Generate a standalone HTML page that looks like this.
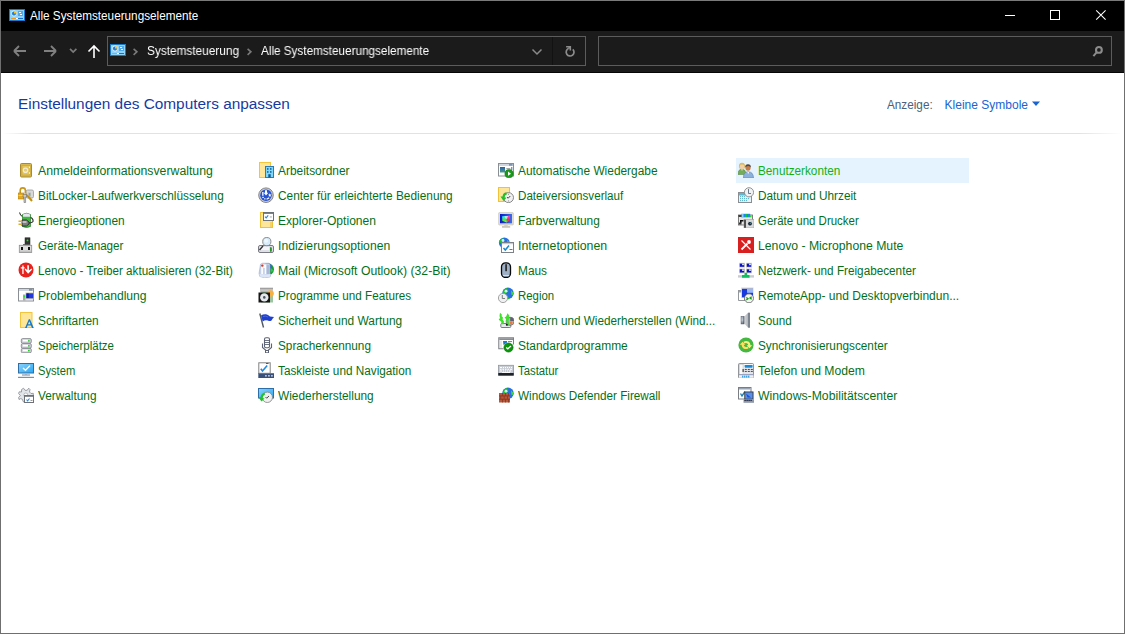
<!DOCTYPE html><html><head><meta charset="utf-8"><style>
*{margin:0;padding:0;box-sizing:border-box}
html,body{width:1125px;height:634px;overflow:hidden;background:#fff}
body{position:relative;font-family:"Liberation Sans",sans-serif;}
.a{position:absolute}
#title{left:0;top:0;width:1125px;height:31px;background:#000;border-top:1px solid #7a7a7a}
#tb{left:0;top:31px;width:1125px;height:42px;background:#1b1b1b;border-bottom:1px solid #060606}
#lb{left:0;top:0;width:1px;height:634px;background:#6f6f6f}
#rb{left:1124px;top:0;width:1px;height:634px;background:#6f6f6f}
#bb{left:0;top:633px;width:1125px;height:1px;background:#6f6f6f}
.t{font-size:12px;white-space:nowrap;line-height:14px}
.it{position:absolute;width:233px;height:25px}
.it.h{background:#e5f3ff}
.it svg{position:absolute;left:2px;top:4px;width:16px;height:16px}
.it span{position:absolute;left:22px;top:1px;transform-origin:0 0;line-height:25px;font-size:12px;color:#05701a;white-space:nowrap}
.it.h span{color:#12b012}
</style></head><body>
<div class="a" id="title"></div>
<div class="a" id="tb"></div>
<svg class="a" style="left:9px;top:9px" width="16" height="12" viewBox="0 0 16 12"><rect x="0.5" y="0.5" width="15" height="11" fill="#8fd3fb" stroke="#1a78c8"/>
<rect x="9" y="2" width="5" height="5" fill="#4fa8e8"/>
<rect x="10" y="3" width="2" height="1" fill="#fff"/><rect x="12" y="3" width="1" height="1" fill="#f08a10"/>
<rect x="11" y="5" width="2" height="1" fill="#fff"/>
<circle cx="5" cy="4.5" r="2.6" fill="#2280d8" stroke="#fff" stroke-width="0.8"/>
<path d="M5 4.5V1.9A2.6 2.6 0 0 1 7.6 4.5Z" fill="#ffc010"/>
<rect x="2" y="9" width="5" height="1" fill="#f09a18"/><rect x="7" y="9" width="2" height="1" fill="#fff"/><rect x="9" y="9" width="5" height="1" fill="#1a6fd0"/></svg>
<div class="a t" style="left:30px;top:9px;color:#fff;transform:scaleX(0.978);transform-origin:0 0">Alle Systemsteuerungselemente</div>
<svg class="a" style="left:1000px;top:5px" width="20" height="20"><rect x="5" y="10" width="10" height="1" fill="#fff"/></svg>
<svg class="a" style="left:1045px;top:5px" width="20" height="20"><rect x="5.5" y="5.5" width="9" height="9" fill="none" stroke="#fff" stroke-width="1"/></svg>
<svg class="a" style="left:1090px;top:5px" width="20" height="20"><path d="M6.2 5.3L15.6 14.7M15.6 5.3L6.2 14.7" stroke="#fff" stroke-width="1.05"/></svg>
<svg class="a" style="left:10px;top:41px" width="20" height="20"><path d="M4 10H16M4 10L9 5M4 10L9 15" stroke="#808080" stroke-width="1.8" fill="none"/></svg>
<svg class="a" style="left:40px;top:41px" width="20" height="20"><path d="M16 10H4M16 10L11 5M16 10L11 15" stroke="#808080" stroke-width="1.8" fill="none"/></svg>
<svg class="a" style="left:66px;top:41px" width="14" height="20"><path d="M4 7.8L7.2 11L10.4 7.8" stroke="#7a7a7a" stroke-width="1.7" fill="none"/></svg>
<svg class="a" style="left:84px;top:41px" width="20" height="20"><path d="M10 17V5M4.5 10.5L10 5L15.5 10.5" stroke="#fff" stroke-width="1.6" fill="none"/></svg>
<div class="a" style="left:107px;top:36px;width:479px;height:30px;border:1px solid #5c5c5c;"></div>
<div class="a" style="left:552px;top:37px;width:1px;height:28px;background:#121212"></div>
<svg class="a" style="left:110px;top:44px" width="16" height="12" viewBox="0 0 16 12"><rect x="0.5" y="0.5" width="15" height="11" fill="#8fd3fb" stroke="#1a78c8"/>
<rect x="9" y="2" width="5" height="5" fill="#4fa8e8"/>
<rect x="10" y="3" width="2" height="1" fill="#fff"/><rect x="12" y="3" width="1" height="1" fill="#f08a10"/>
<rect x="11" y="5" width="2" height="1" fill="#fff"/>
<circle cx="5" cy="4.5" r="2.6" fill="#2280d8" stroke="#fff" stroke-width="0.8"/>
<path d="M5 4.5V1.9A2.6 2.6 0 0 1 7.6 4.5Z" fill="#ffc010"/>
<rect x="2" y="9" width="5" height="1" fill="#f09a18"/><rect x="7" y="9" width="2" height="1" fill="#fff"/><rect x="9" y="9" width="5" height="1" fill="#1a6fd0"/></svg>
<svg class="a" style="left:130px;top:46px" width="10" height="12"><path d="M3.6 2.8L6.9 5.8L3.6 8.8" stroke="#7a7a7a" stroke-width="1.6" fill="none"/></svg>
<div class="a t" style="left:147px;top:44px;color:#fff;transform:scaleX(0.986);transform-origin:0 0;will-change:transform">Systemsteuerung</div>
<svg class="a" style="left:244px;top:46px" width="10" height="12"><path d="M3.6 2.8L6.9 5.8L3.6 8.8" stroke="#7a7a7a" stroke-width="1.6" fill="none"/></svg>
<div class="a t" style="left:261px;top:44px;color:#fff;transform:scaleX(0.977);transform-origin:0 0;will-change:transform">Alle Systemsteuerungselemente</div>
<svg class="a" style="left:530px;top:45px" width="14" height="14"><path d="M2.5 4.5L7 9L11.5 4.5" stroke="#8a8a8a" stroke-width="1.5" fill="none"/></svg>
<svg class="a" style="left:562px;top:44px" width="16" height="16"><path d="M10.8 5.3A3.9 3.9 0 1 1 6.4 4.6" stroke="#8c8c8c" stroke-width="1.7" fill="none"/><path d="M4.1 2.7H8.3V6.6" stroke="#8c8c8c" stroke-width="1.6" fill="none"/><path d="M6.3 4.6L8.2 2.8" stroke="#8c8c8c" stroke-width="1.6"/></svg>
<div class="a" style="left:598px;top:36px;width:514px;height:30px;border:1px solid #5c5c5c;"></div>
<svg class="a" style="left:1089px;top:44px" width="16" height="16"><circle cx="9.9" cy="5.9" r="2.9" stroke="#8c8c8c" stroke-width="2.1" fill="none"/><path d="M7.8 8.2L4.4 12.1" stroke="#8c8c8c" stroke-width="2"/></svg>
<div class="a" style="left:18px;top:95px;font-size:15.5px;line-height:18px;color:#163aa2;white-space:nowrap;transform:scaleX(0.992);transform-origin:0 0">Einstellungen des Computers anpassen</div>
<div class="a t" style="left:887px;top:98px;color:#4c607a;transform:scaleX(0.978);transform-origin:0 0;">Anzeige:</div>
<div class="a t" style="left:944.6px;top:98px;color:#1a64d2;">Kleine Symbole</div>
<svg class="a" style="left:1030px;top:100px" width="12" height="8"><path d="M2 1.5H10L6 6Z" fill="#1a64d2"/></svg>
<div class="a" style="left:2px;top:133px;width:1121px;height:1px;background:linear-gradient(90deg,rgba(214,228,245,0) 0%,#d6e4f5 2.5%,#d6e4f5 96%,rgba(214,228,245,0) 100%)"></div>
<div class="it" style="left:16px;top:158px"><svg viewBox="0 0 16 16"><rect x="2.5" y="1.5" width="11" height="13.5" rx="1" fill="#d8b74c" stroke="#a98a32"/>
<rect x="4" y="3.5" width="8" height="9.5" fill="#e4c55c" stroke="#c7a43e" stroke-width="0.6"/>
<circle cx="7.5" cy="8.2" r="2.1" fill="none" stroke="#f2ecd6" stroke-width="1.4"/>
<rect x="7" y="7.7" width="1.2" height="1.2" fill="#d0d0d0"/>
<rect x="11" y="4.5" width="1" height="1.6" fill="#f6f2e2"/><rect x="11" y="10.2" width="1" height="1.6" fill="#f6f2e2"/></svg><span style="transform:scaleX(1.0241)">Anmeldeinformationsverwaltung</span></div>
<div class="it" style="left:16px;top:183px"><svg viewBox="0 0 16 16"><rect x="8" y="3" width="7.5" height="8" rx="1.5" fill="#d8d8d8" stroke="#9a9a9a" stroke-width="0.8"/>
<rect x="10" y="5.5" width="3" height="4" fill="#bcbcbc"/><rect x="11.2" y="6" width="0.9" height="2.5" fill="#2ed82e"/>
<path d="M2.2 6.5V3.5A2.6 2.6 0 0 1 7.4 3.5V6.5" fill="none" stroke="#c9961a" stroke-width="1.6"/>
<rect x="0" y="6" width="6" height="6" fill="#e4aa1e" stroke="#b07d10" stroke-width="0.6"/>
<rect x="0.5" y="8" width="5" height="1" fill="#f8d050"/>
<path d="M8 7L14 14" stroke="#c0900e" stroke-width="2"/><path d="M8.5 6.5L10.5 8.5" stroke="#f0c030" stroke-width="1"/>
<path d="M5 7.5H8.5V10H7.6V15.5H6V10H5Z" fill="#c8c8c8" stroke="#707070" stroke-width="0.6"/></svg><span style="transform:scaleX(0.9840)">BitLocker-Laufwerkverschlüsselung</span></div>
<div class="it" style="left:16px;top:208px"><svg viewBox="0 0 16 16"><path d="M1.5 0.5Q2 3 4.5 4.5" fill="none" stroke="#303030" stroke-width="1.1"/>
<path d="M4.5 2.5Q8.5 0 12.5 2.5V14.5Q8.5 16.5 4.5 14.5Z" fill="#3cba3c" stroke="#2a7a2a" stroke-width="0.7"/>
<path d="M5 2.6Q8.5 0.5 12 2.6V4.8H5Z" fill="#e8e4f4"/>
<path d="M12.5 5.5Q15.5 6.5 15 9.5Q14 11 10 11" fill="none" stroke="#303030" stroke-width="1.1"/>
<path d="M4 8H8.5L11 10V12L8.5 14H4Z" fill="#808080" stroke="#202020" stroke-width="0.8"/>
<rect x="4.5" y="9" width="4" height="2" fill="#c0c0c0"/>
<rect x="0.5" y="8.5" width="3.5" height="1.5" fill="#e0b020"/><rect x="0.5" y="11.5" width="3.5" height="1.5" fill="#e0b020"/></svg><span style="transform:scaleX(0.9920)">Energieoptionen</span></div>
<div class="it" style="left:16px;top:233px"><svg viewBox="0 0 16 16"><rect x="7" y="0.8" width="5" height="7" fill="#353535" stroke="#222" stroke-width="0.5"/>
<circle cx="9.5" cy="3.4" r="0.9" fill="#30e030"/>
<rect x="5" y="7.2" width="7" height="1" fill="#555"/>
<rect x="1.3" y="8.3" width="12.4" height="7.2" fill="#dedede" stroke="#8c8c8c" stroke-width="0.8"/>
<rect x="2" y="13.5" width="11" height="1.5" fill="#c4c4c4"/>
<rect x="3" y="10" width="2" height="3" fill="#111"/><rect x="10" y="10" width="2" height="3" fill="#111"/></svg><span style="transform:scaleX(0.9705)">Geräte-Manager</span></div>
<div class="it" style="left:16px;top:258px"><svg viewBox="0 0 16 16"><circle cx="8" cy="7.9" r="7.5" fill="#e8221c"/>
<path d="M2.8 5.2H4.3V3.6H5.6V5.2H6.6V6.4H5.6V12H4.3V6.4H2.8Z" fill="#fff"/>
<path d="M9.3 3.2H10.9V8.6L13.4 6.4L14.2 7.6L10.1 11.7L6.6 7.6L7.6 6.5L9.3 8.2Z" fill="#fff"/></svg><span style="transform:scaleX(0.9711)">Lenovo - Treiber aktualisieren (32-Bit)</span></div>
<div class="it" style="left:16px;top:283px"><svg viewBox="0 0 16 16"><rect x="0.5" y="1.5" width="15" height="12.5" fill="#fff" stroke="#8a8f96"/>
<rect x="1" y="2" width="14" height="2" fill="#cfd6e0"/><rect x="11" y="2.2" width="3.5" height="1.4" fill="#6b84a8"/>
<rect x="7.5" y="5.5" width="8" height="7" fill="#c8c8b0"/>
<rect x="8.3" y="6.3" width="7" height="5" fill="#2238d8"/><rect x="8.5" y="6.5" width="2.2" height="4.5" fill="#0818a0"/>
<rect x="5" y="7.5" width="2.5" height="6" fill="#a8a8a8"/><circle cx="6.2" cy="9.5" r="0.9" fill="#30e030"/></svg><span style="transform:scaleX(1.0112)">Problembehandlung</span></div>
<div class="it" style="left:16px;top:308px"><svg viewBox="0 0 16 16"><rect x="2.5" y="0.5" width="11.5" height="15" fill="#fde69a" stroke="#f2c53c"/>
<path d="M7 16L10.8 7.2H12L15.8 16H14L13 13.6H9.6L8.7 16Z M10 12.3H12.5L11.3 9.2Z" fill="#1278d0"/></svg><span style="transform:scaleX(0.9869)">Schriftarten</span></div>
<div class="it" style="left:16px;top:333px"><svg viewBox="0 0 16 16"><g id="dr"><rect x="3.3" y="1.6" width="10" height="4.6" rx="1.3" fill="#d4d4dc" stroke="#7c7c88" stroke-width="0.8"/><rect x="5" y="2.8" width="5" height="1.6" fill="#fff"/><rect x="10" y="3.2" width="1.6" height="1.3" fill="#22d022"/></g>
<rect x="3.3" y="6.6" width="10" height="4.6" rx="1.3" fill="#d4d4dc" stroke="#7c7c88" stroke-width="0.8"/><rect x="5" y="7.8" width="5" height="1.6" fill="#fff"/><rect x="10" y="8.2" width="1.6" height="1.3" fill="#22d022"/>
<rect x="3.3" y="11.4" width="10" height="4.4" rx="1.3" fill="#d4d4dc" stroke="#7c7c88" stroke-width="0.8"/><rect x="5" y="12.6" width="5" height="1.6" fill="#fff"/><rect x="10" y="13" width="1.6" height="1.3" fill="#22d022"/></svg><span style="transform:scaleX(0.9570)">Speicherplätze</span></div>
<div class="it" style="left:16px;top:358px"><svg viewBox="0 0 16 16"><defs><linearGradient id="sysg" x1="0" y1="0" x2="1" y2="1"><stop offset="0" stop-color="#8ad4fb"/><stop offset="1" stop-color="#2aa6f2"/></linearGradient></defs>
<rect x="0.5" y="1.5" width="15" height="9.5" fill="url(#sysg)" stroke="#2f6ea6"/>
<path d="M5 6L7.5 8.3L12 3.6" fill="none" stroke="#fff" stroke-width="1.3"/>
<rect x="7" y="11.5" width="2" height="1" fill="#a8b8c8"/><rect x="4" y="12.5" width="8" height="1" fill="#6c84a0"/>
<rect x="0" y="14.8" width="16" height="1.2" fill="#7a90a8"/></svg><span style="transform:scaleX(0.9300)">System</span></div>
<div class="it" style="left:16px;top:383px"><svg viewBox="0 0 16 16"><path d="M5.5 1.2L7 3.3L9.2 3.3L10.7 1.2L12 2.5L11.5 5L13 6.5L15.3 6.3V8.5L13 8.8L12.2 10.5L6 15L5 14.5L4.6 12.5L2.8 11.6L1 12.5L0.6 10.5L2.3 8.5L0.6 6.5L1.2 4.8L3.5 5L3.6 2.5Z" fill="#e2e6ea" stroke="#85898e" stroke-width="0.8"/>
<circle cx="7.8" cy="8" r="2" fill="#fff" stroke="#85898e" stroke-width="0.5"/>
<rect x="6.5" y="8.5" width="9" height="7" fill="#fff" stroke="#6e7278"/>
<rect x="7" y="9" width="8" height="1" fill="#8a8e94"/>
<path d="M8.5 12.5L9.6 13.8L11.5 11.5" fill="none" stroke="#2a8ae6" stroke-width="1.1"/>
<rect x="12.5" y="13" width="2" height="1" fill="#999"/></svg><span style="transform:scaleX(0.9847)">Verwaltung</span></div>
<div class="it" style="left:256px;top:158px"><svg viewBox="0 0 16 16"><rect x="1.5" y="0.5" width="11" height="15" fill="#fde69a" stroke="#f2c53c"/>
<rect x="7.5" y="4.5" width="8" height="11" fill="#7ed8fb" stroke="#2a7cb8"/>
<rect x="9" y="6.2" width="1.5" height="1.5" fill="#0b5a8e"/><rect x="12" y="6.2" width="1.5" height="1.5" fill="#0b5a8e"/>
<rect x="9" y="9.2" width="1.5" height="1.5" fill="#0b5a8e"/><rect x="12" y="9.2" width="1.5" height="1.5" fill="#0b5a8e"/>
<rect x="10.3" y="12.2" width="2.4" height="3.3" fill="#0b5a8e"/></svg><span style="transform:scaleX(0.9931)">Arbeitsordner</span></div>
<div class="it" style="left:256px;top:183px"><svg viewBox="0 0 16 16"><circle cx="8" cy="8.2" r="7.3" fill="#c8c8cc" stroke="#7a7a7e" stroke-width="0.9"/>
<circle cx="8" cy="8.2" r="5.8" fill="#2452d2"/>
<path d="M7 3.3H9V5.8H10.3L8 8.4L5.7 5.8H7Z" fill="#fff"/>
<rect x="4.2" y="5" width="1.3" height="3.8" fill="#fff"/>
<rect x="4.3" y="9.8" width="1.5" height="1.2" fill="#fff"/><rect x="6.2" y="11.2" width="1.3" height="1.3" fill="#fff"/>
<path d="M11.8 6.3L12.4 7.6L13.6 7.8L12.6 8.6L12.8 9.8L11.8 9.2L10.8 9.8L11 8.6L10 7.8L11.2 7.6Z" fill="#fff"/>
<path d="M8.6 12.2L11.2 10.8" stroke="#fff" stroke-width="1.2"/></svg><span style="transform:scaleX(0.9881)">Center für erleichterte Bedienung</span></div>
<div class="it" style="left:256px;top:208px"><svg viewBox="0 0 16 16"><rect x="2.5" y="0.5" width="12" height="15" fill="#fde69a" stroke="#efc23a"/>
<rect x="12.5" y="10" width="1" height="5.5" fill="#eac040"/>
<rect x="5.5" y="0.5" width="10" height="8" fill="#fff" stroke="#6c7278"/>
<rect x="6" y="1" width="9" height="1" fill="#7d8288"/>
<path d="M7 4.6L8.2 5.8L10.2 3.4" fill="none" stroke="#2a8ae6" stroke-width="1.2"/>
<rect x="11.8" y="4.5" width="2" height="0.9" fill="#999"/></svg><span style="transform:scaleX(1.0062)">Explorer-Optionen</span></div>
<div class="it" style="left:256px;top:233px"><svg viewBox="0 0 16 16"><rect x="0.5" y="8.5" width="15" height="7" rx="1.5" fill="#e0e0e8" stroke="#7a7a84"/>
<rect x="2" y="10" width="9" height="3" fill="#f4f4fa"/>
<rect x="12" y="10.5" width="1.6" height="4" fill="#222"/><rect x="12.4" y="11" width="0.9" height="3" fill="#30e030"/>
<path d="M5 9L1.5 13" stroke="#303030" stroke-width="1.4"/>
<circle cx="8.8" cy="4.6" r="4.1" fill="#d6ebfb" stroke="#8c8c8c" stroke-width="1"/>
<circle cx="8.2" cy="3.8" r="2" fill="#eef7fe"/></svg><span style="transform:scaleX(1.0127)">Indizierungsoptionen</span></div>
<div class="it" style="left:256px;top:258px"><svg viewBox="0 0 16 16"><circle cx="10" cy="7.3" r="6" fill="#1f9a3a"/>
<path d="M7 1.6Q10 0.8 12.8 2.6L13.8 5L11.5 8.5L10.5 4Z" fill="#2f62cc"/><path d="M12.5 6Q14.5 7 15.5 9L13 10Z" fill="#2fc84a"/>
<path d="M2.5 2.2L4.5 1.2H10.5L12 2.5V11.5L13 12.5L12 15L6.5 15.8L1.8 14.5L1 11.5Z" fill="#c6d2ea" stroke="#8ea0c8" stroke-width="0.5"/>
<rect x="3.2" y="2.5" width="5.3" height="9.5" fill="#fafcff"/>
<path d="M8.5 2.5L11.5 3.2V12.8L8.5 12Z" fill="#aab8d6"/>
<rect x="5" y="6" width="1.8" height="6" fill="#c8d2ea"/>
<path d="M1.5 12L8.5 12.5L12.5 12L12 14.8L6.5 15.5L2 14.5Z" fill="#dde6f8"/>
<circle cx="4.3" cy="3.6" r="1.2" fill="#f02c10"/></svg><span style="transform:scaleX(1.0189)">Mail (Microsoft Outlook) (32-Bit)</span></div>
<div class="it" style="left:256px;top:283px"><svg viewBox="0 0 16 16"><rect x="2" y="0.5" width="13" height="5" fill="#c8c8c8"/><rect x="2" y="1" width="13" height="1.2" fill="#a0a0a0"/>
<rect x="3" y="4" width="12" height="11.5" fill="#9cc4a0"/>
<circle cx="12.5" cy="6.5" r="3.3" fill="#f8b040"/>
<rect x="0.5" y="5.5" width="11.5" height="10" fill="#161616"/>
<circle cx="6.3" cy="10.4" r="4.2" fill="#e4e8ea"/><circle cx="6.3" cy="10.4" r="1.3" fill="#4a5460"/></svg><span style="transform:scaleX(0.9737)">Programme und Features</span></div>
<div class="it" style="left:256px;top:308px"><svg viewBox="0 0 16 16"><path d="M1.8 1.5L5.5 15.5" stroke="#505860" stroke-width="1.4"/>
<path d="M3 3.5Q5 2 8 2.2Q10 2.5 12 4.5L16 5Q14 7 13.5 8.5Q11.5 9.5 10 8.5Q7 7.5 4.7 9.5Z" fill="#2040d0"/>
<path d="M5 4.5Q8 3.5 10 5" fill="none" stroke="#6b82e6" stroke-width="0.6"/></svg><span style="transform:scaleX(0.9936)">Sicherheit und Wartung</span></div>
<div class="it" style="left:256px;top:333px"><svg viewBox="0 0 16 16"><rect x="6.5" y="0.8" width="5" height="10" rx="1.5" fill="#fff" stroke="#5c6274" stroke-width="1.1"/>
<path d="M7 3.5H11M7 5.5H11M7 7.5H11" stroke="#5c6274" stroke-width="0.9"/>
<path d="M4.5 6.5V10.5L8 13.5H10L13.5 10.5V6.5" fill="none" stroke="#5c6274" stroke-width="1.1"/>
<rect x="7.5" y="13.5" width="3" height="2.3" fill="#fff" stroke="#5c6274" stroke-width="1"/></svg><span style="transform:scaleX(0.9809)">Spracherkennung</span></div>
<div class="it" style="left:256px;top:358px"><svg viewBox="0 0 16 16"><rect x="0.8" y="0.8" width="11.4" height="10.5" fill="#fff" stroke="#828282" stroke-width="1"/>
<rect x="8" y="1" width="2.5" height="1" fill="#d02828"/>
<path d="M2.8 6.8L4.5 9L9.2 3.5" fill="none" stroke="#1f8ae0" stroke-width="1.6"/>
<rect x="0.3" y="11" width="15.7" height="5" fill="#38507a"/><rect x="0.3" y="11" width="15.7" height="0.8" fill="#6a82a8"/>
<rect x="7" y="13" width="1.8" height="1.6" fill="#b8c0d0"/><rect x="10" y="13" width="1.8" height="1.6" fill="#b8c0d0"/><rect x="13" y="13" width="1.8" height="1.6" fill="#b8c0d0"/></svg><span style="transform:scaleX(0.9794)">Taskleiste und Navigation</span></div>
<div class="it" style="left:256px;top:383px"><svg viewBox="0 0 16 16"><defs><linearGradient id="wg" x1="0" y1="0" x2="1" y2="1"><stop offset="0" stop-color="#8ad4fb"/><stop offset="1" stop-color="#2aa6f2"/></linearGradient></defs>
<rect x="0.5" y="1.5" width="15" height="9.5" fill="url(#wg)" stroke="#2f6ea6"/>
<circle cx="9.3" cy="10.3" r="5.2" fill="#f0f0f0" stroke="#808080" stroke-width="0.8"/>
<path d="M7.5 10L8.7 11.2L11 9" fill="none" stroke="#333" stroke-width="0.9"/>
<path d="M6.5 5.5Q3 6.5 2.5 10.5L0.5 10.5L3.5 14.5L6.5 11.5L4.5 11Q5 8 7 7.5Z" fill="#22c02a"/></svg><span style="transform:scaleX(0.9896)">Wiederherstellung</span></div>
<div class="it" style="left:496px;top:158px"><svg viewBox="0 0 16 16"><rect x="0.5" y="1.5" width="15" height="12.5" fill="#fff" stroke="#8a8f96"/>
<rect x="1" y="2" width="14" height="2" fill="#cfd6e0"/><rect x="11" y="2.2" width="3.5" height="1.4" fill="#6b84a8"/>
<defs><linearGradient id="ag" x1="0" y1="0" x2="0" y2="1"><stop offset="0" stop-color="#2a60b0"/><stop offset="1" stop-color="#4a9a80"/></linearGradient></defs>
<rect x="2" y="5" width="5" height="5.5" fill="url(#ag)"/>
<rect x="8.3" y="6" width="4" height="0.9" fill="#999"/><rect x="8.3" y="8" width="3" height="0.9" fill="#bbb"/><rect x="13.3" y="5" width="1" height="3" fill="#3a68b0"/>
<circle cx="11" cy="11.7" r="4.1" fill="#1a9a1a" stroke="#0f700f" stroke-width="0.6"/>
<path d="M10 9.6L13 11.7L10 13.8Z" fill="#fff"/></svg><span style="transform:scaleX(0.9915)">Automatische Wiedergabe</span></div>
<div class="it" style="left:496px;top:183px"><svg viewBox="0 0 16 16"><rect x="0.5" y="0.5" width="11" height="14" fill="#fde69a" stroke="#efc23a"/>
<circle cx="10.5" cy="10.6" r="5" fill="#f0f0f2" stroke="#7a7a7a" stroke-width="0.9"/>
<path d="M9 10.2L10.2 11.2L12.3 9" fill="none" stroke="#333" stroke-width="0.9"/>
<rect x="10.2" y="6.8" width="0.7" height="0.9" fill="#555"/><rect x="10.2" y="13.5" width="0.7" height="0.9" fill="#555"/>
<path d="M8.2 5.3Q5 5.8 4.5 9.5L2.5 9.5L5.5 14L8.5 10.8L6.5 10.3Q7 7.8 9 7.3Z" fill="#22c02a"/></svg><span style="transform:scaleX(0.9679)">Dateiversionsverlauf</span></div>
<div class="it" style="left:496px;top:208px"><svg viewBox="0 0 16 16"><defs><linearGradient id="scr" x1="0" y1="0" x2="1" y2="0"><stop offset="0" stop-color="#0818c8"/><stop offset="1" stop-color="#3a70e8"/></linearGradient>
<linearGradient id="cl" x1="0" y1="0" x2="0" y2="1"><stop offset="0" stop-color="#30f0ff"/><stop offset="0.6" stop-color="#40e840"/><stop offset="1" stop-color="#d0f020"/></linearGradient>
<linearGradient id="cr" x1="0" y1="0" x2="0" y2="1"><stop offset="0" stop-color="#ff40d0"/><stop offset="0.6" stop-color="#f02848"/><stop offset="1" stop-color="#ff9020"/></linearGradient></defs>
<rect x="0.6" y="0.6" width="14.8" height="12.4" rx="0.8" fill="#dedcd4" stroke="#c4c2b8" stroke-width="0.6"/>
<rect x="2" y="2" width="12" height="9.3" fill="url(#scr)"/>
<path d="M4.2 4.2L8.8 4V10.5L4.3 8.8Z" fill="url(#cl)"/><path d="M8.8 4L12 3.8L11.8 7.8L8.8 10.5Z" fill="url(#cr)"/>
<path d="M6.5 4.1L10 4L9 7L7.5 6.5Z" fill="#f0f0f0" opacity="0.7"/>
<rect x="6.2" y="13" width="3.6" height="1.2" fill="#d4d2c8"/><rect x="4" y="14" width="8.2" height="1.8" fill="#cac8be"/></svg><span style="transform:scaleX(0.9890)">Farbverwaltung</span></div>
<div class="it" style="left:496px;top:233px"><svg viewBox="0 0 16 16"><circle cx="6.3" cy="5.8" r="5.4" fill="#2870e0"/>
<path d="M1.5 3.5Q3 1 5.5 1.5L6 4L3.5 6L1.2 5.5Z" fill="#20c030"/><path d="M9 3Q10.5 3.5 11 5.5L9.5 5Z" fill="#50e040"/>
<circle cx="5" cy="3.5" r="1.4" fill="#c8f4ff"/>
<rect x="3.5" y="5.5" width="12" height="10" fill="#fff" stroke="#7d8288"/>
<rect x="4" y="6" width="11" height="1.2" fill="#c4ccd6"/>
<path d="M5.5 11L7.3 13L11 8.5" fill="none" stroke="#1a8ad0" stroke-width="1.5"/>
<rect x="11.5" y="12" width="3" height="1" fill="#707090"/></svg><span style="transform:scaleX(1.0279)">Internetoptionen</span></div>
<div class="it" style="left:496px;top:258px"><svg viewBox="0 0 16 16"><rect x="3.5" y="0.8" width="9" height="14.7" rx="4" fill="#9db0c6" stroke="#0a0a0a" stroke-width="1.3"/>
<rect x="7.2" y="2.2" width="1.8" height="7" fill="#303030"/>
<path d="M5 13.5H11" stroke="#e8e8e8" stroke-width="0.8"/></svg><span style="transform:scaleX(0.9897)">Maus</span></div>
<div class="it" style="left:496px;top:283px"><svg viewBox="0 0 16 16"><circle cx="10" cy="6.3" r="5.7" fill="#2870e0"/>
<path d="M5 5Q6 1.5 9 1L10.5 4L7 7L4.5 6.5Z" fill="#20c030"/><path d="M13 3.5Q15.5 5 15.5 7.5L13.5 8Z" fill="#40e030"/>
<path d="M9 9L11.5 11.5L10 12.5Z" fill="#20c030"/>
<circle cx="8" cy="4.2" r="1.4" fill="#d0f8ff"/>
<circle cx="5" cy="11" r="4.6" fill="#eef0f2" stroke="#9a9a9a" stroke-width="0.9"/>
<path d="M4.3 8V11.5H7" fill="none" stroke="#707070" stroke-width="0.9"/></svg><span style="transform:scaleX(0.9500)">Region</span></div>
<div class="it" style="left:496px;top:308px"><svg viewBox="0 0 16 16"><rect x="2.8" y="11.5" width="10" height="4" rx="1" fill="#e8e8f0" stroke="#6a6a78" stroke-width="0.9"/>
<circle cx="12.2" cy="9.3" r="4" fill="#b8b8c8" stroke="#505060" stroke-width="0.7"/><path d="M12.2 5.3A4 4 0 0 1 16 9L12.2 9.3Z" fill="#606070"/>
<circle cx="13.2" cy="11" r="1.4" fill="#f47040"/><circle cx="14.6" cy="11.4" r="0.9" fill="#f0a030"/>
<circle cx="11" cy="9" r="1" fill="#a0b8f0"/>
<path d="M2 0.8L3.8 2.5L3.6 4.2L5 5.5L4.5 7.5L6 9.5L5.5 12.2H3.5L3.2 9.5L1 8L0.8 6.8L2.2 6.5L1.5 4Z" fill="#3ee02a"/>
<path d="M9.5 1.2L11.8 4.2L10.8 4.8L11.5 6.5L10.5 8L11 12L10 14H8.8L8.5 10L8 7L6.5 5.5L8.2 4.5Z" fill="#3ee02a"/>
<circle cx="8.8" cy="12.8" r="1" fill="#1a1a1a"/></svg><span style="transform:scaleX(0.9762)">Sichern und Wiederherstellen (Wind...</span></div>
<div class="it" style="left:496px;top:333px"><svg viewBox="0 0 16 16"><path d="M15.5 7.5V0.8H0.8V11.7H5.5" fill="#fff" stroke="#7c8086" stroke-width="1.1"/>
<rect x="1.3" y="1.2" width="13.7" height="1.8" fill="#8a8e94"/>
<rect x="2" y="3.5" width="2" height="7.5" fill="#e8e8e8"/>
<path d="M5 4H9V5.5L5.5 8Z" fill="#1a78d8"/><rect x="10" y="4" width="4" height="1" fill="#888"/>
<circle cx="10.5" cy="10.5" r="4.6" fill="#0a960a" stroke="#086808" stroke-width="0.6"/>
<path d="M8.2 10.4L9.8 11.8L13 9" fill="none" stroke="#fff" stroke-width="1.3"/></svg><span style="transform:scaleX(0.9973)">Standardprogramme</span></div>
<div class="it" style="left:496px;top:358px"><svg viewBox="0 0 16 16"><rect x="0.5" y="3.3" width="15" height="9.8" fill="#c8ccd4" stroke="#9096a0" stroke-width="0.8"/>
<g fill="#fff"><rect x="2" y="5" width="2" height="1"/><rect x="5" y="5" width="1" height="1"/><rect x="7" y="5" width="1" height="1"/><rect x="9" y="5" width="1" height="1"/><rect x="11" y="5" width="1" height="1"/><rect x="13" y="5" width="1" height="1"/>
<rect x="2" y="6.8" width="1.5" height="1"/><rect x="4.5" y="6.8" width="1.5" height="1"/><rect x="7" y="6.8" width="1.5" height="1"/><rect x="9.5" y="6.8" width="1.5" height="1"/><rect x="12" y="6.8" width="2" height="1"/>
<rect x="2" y="8.5" width="2" height="1"/><rect x="5" y="8.5" width="1" height="1"/><rect x="7" y="8.5" width="1" height="1"/><rect x="9" y="8.5" width="1" height="1"/><rect x="11" y="8.5" width="2" height="1"/>
<rect x="4" y="10" width="8" height="0.9"/></g>
<rect x="0.3" y="11" width="15.4" height="2.6" fill="#1c2228"/></svg><span style="transform:scaleX(0.9442)">Tastatur</span></div>
<div class="it" style="left:496px;top:383px"><svg viewBox="0 0 16 16"><circle cx="10" cy="6.3" r="5.7" fill="#2870e0"/>
<path d="M5 5Q6 1.5 9 1L10.5 4L7 7L4.5 6.5Z" fill="#20c030"/><path d="M13 3.5Q15.5 5 15.5 7.5L13.5 8Z" fill="#40e030"/>
<circle cx="8" cy="4.2" r="1.4" fill="#d0f8ff"/>
<rect x="1" y="6" width="11" height="9.5" fill="#b8583a"/>
<g fill="#7a2a18"><rect x="1" y="8.6" width="11" height="0.7"/><rect x="1" y="11.8" width="11" height="0.7"/>
<rect x="4" y="6" width="0.6" height="2.6"/><rect x="7.3" y="6" width="0.6" height="2.6"/><rect x="10.3" y="6" width="0.6" height="2.6"/>
<rect x="2.5" y="9.3" width="0.6" height="2.5"/><rect x="5.8" y="9.3" width="0.6" height="2.5"/><rect x="9" y="9.3" width="0.6" height="2.5"/>
<rect x="4" y="12.5" width="0.6" height="3"/><rect x="7.3" y="12.5" width="0.6" height="3"/><rect x="10.3" y="12.5" width="0.6" height="3"/></g></svg><span style="transform:scaleX(0.9753)">Windows Defender Firewall</span></div>
<div class="it h" style="left:736px;top:158px"><svg viewBox="0 0 16 16"><path d="M0 12.5Q0 7.2 3.8 7.2Q7.5 7.2 7.8 11L6.5 12.5Z" fill="#74ac58" stroke="#4f7f3c" stroke-width="0.5"/>
<path d="M3.2 7.3L4 9L4.8 7.3Z" fill="#f4f4f4"/>
<path d="M1 4.5Q0.8 0.8 4 0.8Q7.2 0.8 7 4.5L6.5 6.5H1.5Z" fill="#d8b860"/>
<ellipse cx="4" cy="4.2" rx="2.2" ry="2.6" fill="#f2cfa8"/>
<path d="M1.8 3.2Q2.5 1.2 4 1.3Q5.8 1.3 6.3 3.2Q5 2.2 3.5 2.6Z" fill="#d8b860"/>
<path d="M5.5 16Q5.2 9.8 10.2 9.8Q15.3 9.8 15.5 16Z" fill="#8cb2dc" stroke="#5a7cb0" stroke-width="0.6"/>
<path d="M9.4 9.9L10.2 12.3L11 9.9Z" fill="#fff"/>
<ellipse cx="10" cy="5.8" rx="2.6" ry="3" fill="#c47c48"/>
<path d="M7.3 5.5Q7 2.3 10 2.3Q13 2.3 12.8 5.5Q11.8 3.8 10 4Q8.2 4 7.3 5.5Z" fill="#4a4a4a"/></svg><span style="transform:scaleX(0.9786)">Benutzerkonten</span></div>
<div class="it" style="left:736px;top:183px"><svg viewBox="0 0 16 16"><rect x="0.5" y="5.5" width="13" height="10" fill="#e8f4fa" stroke="#8a8e92"/>
<rect x="1" y="6" width="12" height="2.5" fill="#5ab8d0"/>
<g fill="#4aaac4"><circle cx="2.6" cy="9.6" r="0.6"/><circle cx="4.6" cy="9.6" r="0.6"/><circle cx="6.6" cy="9.6" r="0.6"/>
<circle cx="2.6" cy="11.6" r="0.6"/><circle cx="4.6" cy="11.6" r="0.6"/><circle cx="6.6" cy="11.6" r="0.6"/><circle cx="8.6" cy="11.6" r="0.6"/><circle cx="10.6" cy="11.6" r="0.6"/>
<circle cx="2.6" cy="13.6" r="0.6"/><circle cx="4.6" cy="13.6" r="0.6"/><circle cx="6.6" cy="13.6" r="0.6"/><circle cx="8.6" cy="13.6" r="0.6"/></g>
<circle cx="11" cy="5.3" r="4.6" fill="#f0f2f4" stroke="#888" stroke-width="0.9"/>
<path d="M10.5 2V6.5H13" fill="none" stroke="#5a6a80" stroke-width="0.9"/></svg><span style="transform:scaleX(0.9832)">Datum und Uhrzeit</span></div>
<div class="it" style="left:736px;top:208px"><svg viewBox="0 0 16 16"><rect x="0.5" y="3" width="14" height="10" fill="#e8e8e8" stroke="#606060" stroke-width="0.8"/>
<rect x="3.2" y="1.8" width="9" height="3.5" fill="#1a8ae8"/><rect x="3.5" y="2" width="2" height="3" fill="#8ad0f8"/><rect x="7.3" y="2" width="1.8" height="3" fill="#10c040"/>
<circle cx="12.7" cy="4.3" r="0.9" fill="#20e020"/>
<rect x="0.5" y="3" width="3" height="2" fill="#404040"/>
<path d="M2 8H5.5V9.5H3.5V11H2Z" fill="#111"/><rect x="1" y="10.5" width="2.5" height="2" fill="#333"/>
<rect x="6" y="7.5" width="10" height="8.5" fill="#d8d8d8" stroke="#a0a0a0" stroke-width="0.6"/>
<rect x="6" y="7.8" width="2" height="8" fill="#505050"/>
<circle cx="12" cy="11.7" r="2.4" fill="#1a2a3a" stroke="#f4f4f4" stroke-width="0.8"/><circle cx="12.4" cy="11.3" r="0.8" fill="#3a8a9a"/></svg><span style="transform:scaleX(0.9566)">Geräte und Drucker</span></div>
<div class="it" style="left:736px;top:233px"><svg viewBox="0 0 16 16"><rect x="0" y="0" width="16" height="16" fill="#d82020"/>
<path d="M3.5 3.5L12.5 12.5" stroke="#fff" stroke-width="1.1"/>
<path d="M3.5 12.5L9.5 6.5" stroke="#fff" stroke-width="1.8"/>
<circle cx="11" cy="5" r="1.9" fill="#fff"/></svg><span style="transform:scaleX(1.0182)">Lenovo - Microphone Mute</span></div>
<div class="it" style="left:736px;top:258px"><svg viewBox="0 0 16 16"><g><rect x="1" y="0.8" width="6" height="4.8" fill="#d8d4c0"/><rect x="1.8" y="1.6" width="4.4" height="3.2" fill="#0a10c8"/><rect x="4" y="1.6" width="2.2" height="1.6" fill="#c8d8ff"/></g>
<g><rect x="8" y="0.8" width="6" height="4.8" fill="#d8d4c0"/><rect x="8.8" y="1.6" width="4.4" height="3.2" fill="#0a10c8"/><rect x="11" y="1.6" width="2.2" height="1.6" fill="#c8d8ff"/></g>
<g><rect x="1" y="6.5" width="6" height="4.8" fill="#d8d4c0"/><rect x="1.8" y="7.3" width="4.4" height="3.2" fill="#0a10c8"/><rect x="4" y="7.3" width="2.2" height="1.6" fill="#c8d8ff"/></g>
<g><rect x="8" y="6.5" width="6" height="4.8" fill="#d8d4c0"/><rect x="8.8" y="7.3" width="4.4" height="3.2" fill="#0a10c8"/><rect x="11" y="7.3" width="2.2" height="1.6" fill="#c8d8ff"/></g>
<rect x="0" y="13.2" width="16" height="2.4" fill="#c8ccd0"/>
<path d="M6.5 10.8H9.2V13H11.5V15.7H4V13H6.5Z" fill="#10c060"/></svg><span style="transform:scaleX(0.9778)">Netzwerk- und Freigabecenter</span></div>
<div class="it" style="left:736px;top:283px"><svg viewBox="0 0 16 16"><rect x="0.6" y="3.5" width="6" height="10" fill="#fff" stroke="#7a7e84" stroke-width="0.8"/>
<rect x="1" y="4" width="5" height="1.5" fill="#98a4b4"/>
<rect x="3.2" y="0.5" width="12.3" height="10.5" fill="#ddd8c4"/>
<rect x="4" y="1.8" width="11" height="8.5" fill="#1838e0"/><rect x="9" y="1.8" width="6" height="4" fill="#98b8f8"/>
<circle cx="11" cy="11.3" r="4.5" fill="#f4f4f4" stroke="#606060" stroke-width="0.8"/>
<path d="M8.3 10.5L10 11.8L8.3 13M13.7 9.8L12 11L13.7 12.3" fill="none" stroke="#10a010" stroke-width="1.3"/></svg><span style="transform:scaleX(1.0020)">RemoteApp- und Desktopverbindun...</span></div>
<div class="it" style="left:736px;top:308px"><svg viewBox="0 0 16 16"><defs><linearGradient id="spk2" x1="0" y1="0" x2="1" y2="0"><stop offset="0" stop-color="#d4d6da"/><stop offset="0.6" stop-color="#b4b8be"/><stop offset="1" stop-color="#a0a6ae"/></linearGradient>
<linearGradient id="spk3" x1="0" y1="0" x2="0" y2="1"><stop offset="0" stop-color="#9aa6b4"/><stop offset="0.5" stop-color="#c0c8d2"/><stop offset="1" stop-color="#6a7280"/></linearGradient></defs>
<rect x="3" y="4.2" width="3.2" height="7.8" fill="url(#spk3)" stroke="#4a5260" stroke-width="0.4"/>
<rect x="5.6" y="4.5" width="0.8" height="7.2" fill="#2a2e36"/>
<path d="M6.4 4.5L10 0.8H12V15.6H10L6.4 11.7Z" fill="url(#spk2)"/>
<rect x="10" y="0.8" width="2" height="14.8" fill="#7c8490"/></svg><span style="transform:scaleX(0.9735)">Sound</span></div>
<div class="it" style="left:736px;top:333px"><svg viewBox="0 0 16 16"><circle cx="8" cy="8" r="7.6" fill="#44b840"/>
<path d="M5.5 4.8Q8 3.2 10.5 4.6Q12.3 5.8 12.5 8.2H14.3L11.4 11.3L8.6 8.2H10.3Q10.2 6.6 8.8 6.2Q7.5 5.8 6.4 6.6Z" fill="#f6f080"/>
<path d="M10.5 11.2Q8 12.8 5.5 11.4Q3.7 10.2 3.5 7.8H1.7L4.6 4.7L7.4 7.8H5.7Q5.8 9.4 7.2 9.8Q8.5 10.2 9.6 9.4Z" fill="#fde060"/></svg><span style="transform:scaleX(0.9818)">Synchronisierungscenter</span></div>
<div class="it" style="left:736px;top:358px"><svg viewBox="0 0 16 16"><rect x="0.5" y="1.5" width="15" height="14.5" rx="1" fill="#e4e6ea" stroke="#7a7e84" stroke-width="0.8"/>
<rect x="1.5" y="2.2" width="3.5" height="10" fill="#fafafa" stroke="#b8b8b8" stroke-width="0.4"/>
<rect x="4.6" y="7" width="1" height="3" fill="#202020"/>
<rect x="6" y="2.3" width="9" height="4" fill="#fff"/><rect x="6.6" y="2.9" width="8" height="2.8" rx="0.6" fill="#1a8ad6"/>
<g fill="#4c525c"><rect x="6.8" y="6.9" width="2" height="1.1"/><rect x="9.8" y="6.9" width="2" height="1.1"/><rect x="12.8" y="6.9" width="2" height="1.1"/>
<rect x="6.8" y="8.9" width="2" height="1.1"/><rect x="9.8" y="8.9" width="2" height="1.1"/><rect x="12.8" y="8.9" width="2" height="1.1"/></g>
<rect x="1" y="12" width="14.5" height="1.4" fill="#9aa4c0"/>
<rect x="1" y="13.4" width="14.5" height="2.2" fill="#f0f0f2"/>
<g fill="#1a90d8"><rect x="4.2" y="13.6" width="1.1" height="2"/><rect x="6.2" y="13.6" width="1.1" height="2"/><rect x="8.2" y="13.6" width="1.1" height="2"/><rect x="10.2" y="13.6" width="1.1" height="2"/></g></svg><span style="transform:scaleX(1.0143)">Telefon und Modem</span></div>
<div class="it" style="left:736px;top:383px"><svg viewBox="0 0 16 16"><rect x="0.5" y="0.5" width="12.5" height="11.5" fill="#fff" stroke="#7a7e84"/>
<rect x="1" y="1" width="11.5" height="1.5" fill="#98a4b4"/>
<path d="M2.5 6.5L4 9L7 4.5" fill="none" stroke="#1a80b8" stroke-width="1.4"/>
<rect x="6.3" y="4.5" width="9.2" height="8" fill="#303438"/>
<rect x="7.2" y="5.4" width="7.4" height="6.3" fill="#5a90e8"/><path d="M8 6.5L13 10.5H9.5Z" fill="#1a50d8"/>
<rect x="5.5" y="12.3" width="10.5" height="3.5" fill="#9098a8"/>
<g fill="#10122a"><rect x="6.5" y="12.8" width="1.2" height="1.2"/><rect x="8.5" y="12.8" width="1.2" height="1.2"/><rect x="10.5" y="12.8" width="1.2" height="1.2"/><rect x="12.5" y="12.8" width="1.2" height="1.2"/></g></svg><span style="transform:scaleX(1.0190)">Windows-Mobilitätscenter</span></div>
<div class="a" id="lb"></div><div class="a" id="rb"></div><div class="a" id="bb"></div>
</body></html>
